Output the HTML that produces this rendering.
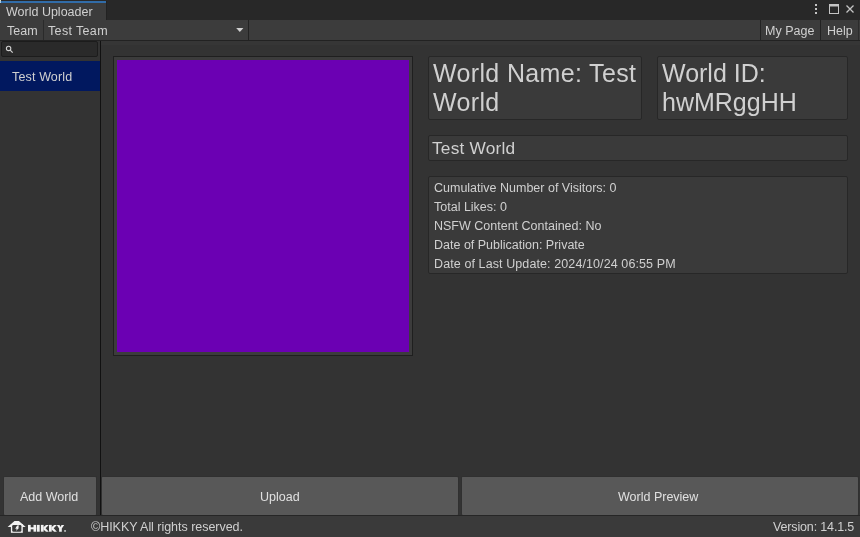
<!DOCTYPE html>
<html><head><meta charset="utf-8">
<style>
*{margin:0;padding:0;box-sizing:border-box}
html,body{width:860px;height:537px;overflow:hidden;background:#333333;font-family:"Liberation Sans",sans-serif;color:#d0d0d0;font-size:12.5px}
.a{position:absolute}
.t{position:absolute;white-space:nowrap;line-height:1;will-change:transform}
.box{position:absolute;background:#3a3a3a;border:1px solid #272727;border-radius:2px}
.btn{position:absolute;background:#585858;border:1px solid #303030;border-bottom-color:#232323;border-radius:2px}
.bt{position:absolute;white-space:nowrap;line-height:1;color:#e0e0e0;will-change:transform}
</style></head><body>
<!-- tab strip -->
<div class="a" style="left:0;top:0;width:860px;height:20px;background:#282828"></div>
<div class="a" style="left:0;top:1px;width:106px;height:19px;background:#3c3c3c"></div>
<div class="a" style="left:106px;top:1px;width:1px;height:19px;background:#222222"></div>
<div class="a" style="left:0;top:1px;width:106px;height:2px;background:#316ca8"></div>
<div class="a" style="left:0;top:0;width:1px;height:3px;background:#a9c9e6"></div>
<div class="a" style="left:0;top:0;width:1px;height:1px;background:#dcdcc0"></div>
<div class="t" style="left:6px;top:6px">World Uploader</div>
<!-- window icons -->
<svg class="a" style="left:810px;top:0" width="50" height="20" viewBox="0 0 50 20">
  <rect x="5" y="4" width="2" height="2" fill="#c4c4c4"/>
  <rect x="5" y="8" width="2" height="2" fill="#c4c4c4"/>
  <rect x="5" y="12" width="2" height="2" fill="#c4c4c4"/>
  <rect x="19.5" y="4.5" width="9" height="9" fill="none" stroke="#c4c4c4" stroke-width="1"/>
  <rect x="19" y="4" width="10" height="2.5" fill="#c4c4c4"/>
  <path d="M36.5 5.5 L43.5 12.5 M43.5 5.5 L36.5 12.5" stroke="#c4c4c4" stroke-width="1.3"/>
</svg>
<!-- toolbar -->
<div class="a" style="left:0;top:20px;width:860px;height:20px;background:#3c3c3c"></div>
<div class="a" style="left:0;top:40px;width:860px;height:1px;background:#222222"></div>
<div class="a" style="left:101px;top:41px;width:759px;height:4px;background:#363636"></div>
<div class="t" style="left:7px;top:25px">Team</div>
<div class="a" style="left:43px;top:20px;width:1px;height:20px;background:#2a2a2a"></div>
<div class="t" style="left:48px;top:25px;letter-spacing:0.35px">Test Team</div>
<svg class="a" style="left:235px;top:26px" width="10" height="8"><path d="M1.2 2 L8.4 2 L4.8 6 Z" fill="#d0d0d0"/></svg>
<div class="a" style="left:248px;top:20px;width:1px;height:20px;background:#232323"></div>
<div class="a" style="left:760px;top:20px;width:1px;height:20px;background:#232323"></div>
<div class="t" style="left:765px;top:24.8px">My Page</div>
<div class="a" style="left:820px;top:20px;width:1px;height:20px;background:#232323"></div>
<div class="t" style="left:827px;top:25px">Help</div>
<div class="a" style="left:858px;top:20px;width:1px;height:20px;background:#2c2c2c"></div>
<!-- left panel -->
<div class="a" style="left:100px;top:41px;width:1px;height:475px;background:#111111"></div>
<div class="a" style="left:1px;top:41px;width:97px;height:16px;background:#2a2a2a;border:1px solid #1c1c1c;border-radius:2px"></div>
<svg class="a" style="left:4px;top:44px" width="10" height="10"><circle cx="4.6" cy="4.4" r="2.2" fill="none" stroke="#d0d0d0" stroke-width="1.1"/><path d="M6.2 6.1 L8.7 8.7" stroke="#d0d0d0" stroke-width="1.2"/></svg>
<div class="a" style="left:0;top:61px;width:100px;height:30px;background:#01185f"></div>
<div class="t" style="left:11.5px;top:71px;letter-spacing:0.15px">Test World</div>
<!-- main image -->
<div class="a" style="left:113px;top:56px;width:300px;height:300px;background:#3c3c3c;border:1px solid #1f1f1f"></div>
<div class="a" style="left:117px;top:60px;width:292px;height:292px;background:#6b00b3"></div>
<!-- name / id boxes -->
<div class="box" style="left:428px;top:56px;width:214px;height:64px"></div>
<div class="t" style="left:432.5px;top:59px;font-size:25px;line-height:29px;letter-spacing:0.35px">World Name: Test<br>World</div>
<div class="box" style="left:657px;top:56px;width:191px;height:64px"></div>
<div class="t" style="left:661.5px;top:59px;font-size:25px;line-height:29px;letter-spacing:0px">World ID:<br>hwMRggHH</div>
<div class="box" style="left:428px;top:135px;width:420px;height:26px"></div>
<div class="t" style="left:431.5px;top:140px;font-size:17.3px;letter-spacing:0.2px">Test World</div>
<div class="box" style="left:428px;top:176px;width:420px;height:98px"></div>
<div class="t" style="left:434px;top:179px;line-height:19px">Cumulative Number of Visitors: 0<br>Total Likes: 0<br>NSFW Content Contained: No<br>Date of Publication: Private<br><span style="letter-spacing:0.1px">Date of Last Update: 2024/10/24 06:55 PM</span></div>
<!-- buttons -->
<div class="btn" style="left:3px;top:476px;width:94px;height:40px"></div>
<div class="bt" style="left:20px;top:491px">Add World</div>
<div class="btn" style="left:101px;top:476px;width:358px;height:40px"></div>
<div class="bt" style="left:260px;top:491px">Upload</div>
<div class="btn" style="left:461px;top:476px;width:398px;height:40px"></div>
<div class="bt" style="left:618px;top:491px">World Preview</div>
<!-- footer -->
<div class="a" style="left:0;top:515px;width:860px;height:1px;background:#262626"></div>
<div class="a" style="left:0;top:516px;width:860px;height:21px;background:#3a3a3a"></div>
<svg class="a" style="left:6px;top:518px" width="64" height="18" viewBox="0 0 64 18">
  <path d="M1.6 9 L8.5 2.9 L12.9 2.9 L19.7 9 Z" fill="#f2f2f2"/>
  <rect x="4.9" y="6" width="11.9" height="8.8" fill="#f2f2f2"/>
  <rect x="6.2" y="7" width="9.2" height="6.7" rx="1.3" fill="#383838"/>
  <path d="M11.1 7.4 L13.3 7.4 L12 9.5 L13.4 9.5 L10 13.1 L10.8 10.8 L9.2 10.8 Z" fill="#f2f2f2"/>
  <g fill="#f2f2f2">
  <rect x="22" y="6.9" width="2.7" height="6.8"/><rect x="27.5" y="6.9" width="2.7" height="6.8"/><rect x="22" y="9.3" width="8.2" height="2"/>
  <rect x="31" y="6.9" width="2.7" height="6.8"/>
  <rect x="34.9" y="6.9" width="2.7" height="6.8"/><path d="M37.4 9.2 L40 6.9 L42.8 6.9 L39.6 10.3 L42.8 13.7 L40 13.7 L37.4 11.4 Z"/>
  <rect x="43" y="6.9" width="2.7" height="6.8"/><path d="M45.5 9.2 L48.1 6.9 L50.9 6.9 L47.7 10.3 L50.9 13.7 L48.1 13.7 L45.5 11.4 Z"/>
  <path d="M50.8 6.9 L53.5 6.9 L54.5 8.9 L55.5 6.9 L58.2 6.9 L55.8 10.6 L55.8 13.7 L53.1 13.7 L53.1 10.6 Z"/>
  <rect x="58.3" y="12.2" width="1.5" height="1.5"/>
  </g>
</svg>
<div class="t" style="left:90.8px;top:521px;letter-spacing:-0.03px">©HIKKY All rights reserved.</div>
<div class="t" style="left:773px;top:521px;letter-spacing:-0.15px">Version: 14.1.5</div>
</body></html>
